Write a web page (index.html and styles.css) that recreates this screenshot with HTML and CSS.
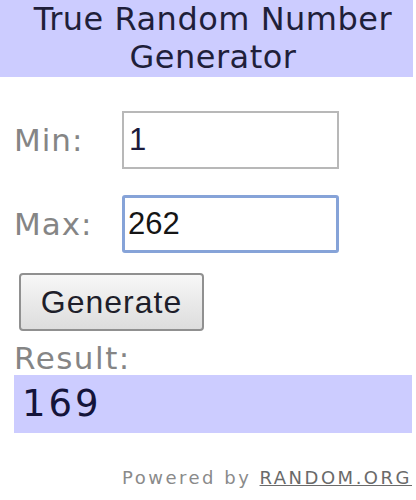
FILE: index.html
```html
<!DOCTYPE html>
<html>
<head>
<meta charset="utf-8">
<link rel="stylesheet" href="styles.css">
</head>
<body>
<div class="widget">
  <div class="title">True Random Number Generator</div>
  <div class="row row-min">
    <span class="label">Min:</span>
    <div class="input">1</div>
  </div>
  <div class="row row-max">
    <span class="label">Max:</span>
    <div class="input focus">262</div>
  </div>
  <div class="btn-row">
    <div class="btn">Generate</div>
  </div>
  <div class="result-label">Result:</div>
  <div class="result">169</div>
  <div class="powered">Powered by <span class="link">RANDOM.ORG</span></div>
</div>
</body>
</html>
```
FILE: styles.css
```css
html, body {
  margin: 0;
  padding: 0;
  background: #ffffff;
}
.widget {
  width: 416px;
  height: 500px;
  font-family: "DejaVu Sans", Verdana, sans-serif;
}
.title {
  background: #ccccff;
  width: 413px;
  height: 77px;
  box-sizing: border-box;
  padding: 0 0 0 13px;
  text-align: center;
  font-size: 32px;
  letter-spacing: 0.5px;
  line-height: 38px;
  color: #1f1f3a;
}
.row {
  display: flex;
  align-items: center;
  padding-left: 14px;
}
.row-min {
  margin-top: 34px;
}
.row-max {
  margin-top: 26px;
}
.label {
  width: 108px;
  font-size: 31px;
  letter-spacing: 1px;
  color: #858585;
}
.input {
  width: 217px;
  height: 58px;
  box-sizing: border-box;
  border: 2px solid #b8b8b8;
  background: #fff;
  padding-left: 5px;
  display: flex;
  align-items: center;
  font-family: "Liberation Sans", Arial, sans-serif;
  font-size: 31px;
  color: #1b1b3c;
}
.input.focus {
  border: 3px solid #86a3d8;
  border-radius: 3px;
  padding-left: 3px;
  color: #151515;
}
.btn-row {
  padding-left: 19px;
  margin-top: 20px;
}
.btn {
  width: 185px;
  height: 58px;
  box-sizing: border-box;
  border: 2px solid #909090;
  border-radius: 4px;
  background: linear-gradient(#f7f7f7, #dddddd);
  display: flex;
  align-items: center;
  justify-content: center;
  font-family: "Liberation Sans", Arial, sans-serif;
  font-size: 32px;
  letter-spacing: 1px;
  color: #1e1e2a;
}
.result-label {
  padding-left: 14px;
  margin-top: 10px;
  font-size: 31px;
  letter-spacing: 1.5px;
  line-height: 34px;
  color: #858585;
}
.result {
  margin-left: 14px;
  width: 398px;
  height: 58px;
  box-sizing: border-box;
  background: #ccccff;
  padding-left: 8px;
  font-size: 37px;
  letter-spacing: 3px;
  line-height: 58px;
  color: #14143a;
}
.powered {
  margin-top: 33px;
  text-align: right;
  padding-right: 4px;
  font-size: 18px;
  letter-spacing: 2.5px;
  line-height: 24px;
  color: #8a8a8a;
}
.link {
  color: #6a6a6a;
  text-decoration: underline;
}
```
